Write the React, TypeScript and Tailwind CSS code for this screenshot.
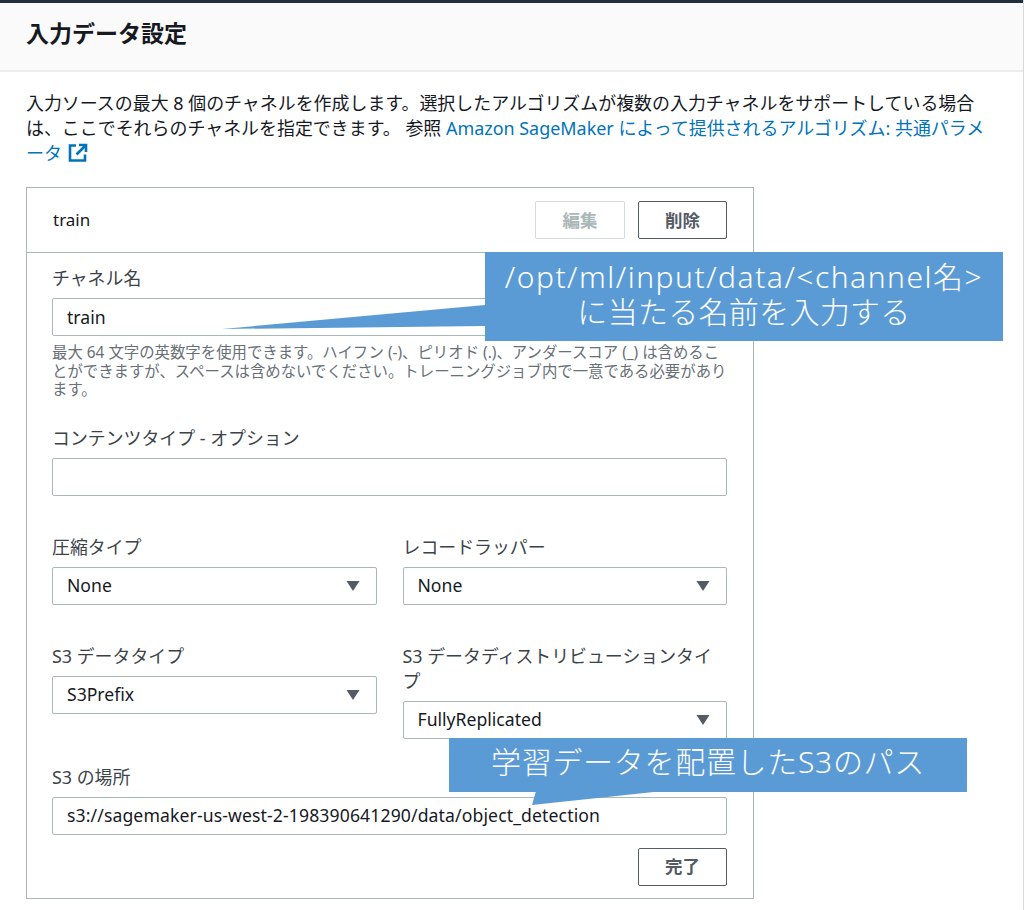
const inputCls =
  'h-[38px] w-full rounded-[2px] border border-[#aab7b8] bg-white px-[14px] flex items-center text-[17.6px] text-[#16191f]'

function Field({ label, children, className = '' }: { label: string; children?: React.ReactNode; className?: string }) {
  return (
    <div className={className}>
      <div className="mb-[7px] text-[17.9px] leading-[25px] text-[#3b4349]">{label}</div>
      {children}
    </div>
  )
}

function TextBox({ value }: { value?: string }) {
  return <div className={inputCls}>{value}</div>
}

function SelectBox({ value }: { value: string }) {
  return (
    <div className={inputCls + ' justify-between'}>
      <span>{value}</span>
      <svg width="16" height="12" viewBox="0 0 16 12" className="mr-[1px]">
        <path d="M1.5 1h13L8 11z" fill="#545b64" />
      </svg>
    </div>
  )
}

function Button({ children, disabled }: { children: React.ReactNode; disabled?: boolean }) {
  return (
    <button
      className={
        disabled
          ? 'h-[38px] w-[90px] rounded-[2px] border border-[#d5dbdb] bg-white text-[17.5px] font-bold text-[#aab7b8]'
          : 'h-[38px] w-[89px] rounded-[2px] border border-[#545b64] bg-white text-[17.5px] font-bold text-[#545b64]'
      }
    >
      {children}
    </button>
  )
}

export default function App() {
  return (
    <div
      className="relative h-[910px] w-full overflow-hidden border-r border-[#d5dbdb] bg-white text-[#16191f]"
      style={{ fontFamily: '"Noto Sans", "Noto Sans CJK JP", sans-serif' }}
    >
      <div className="h-[3px] bg-[#232f3e]" />

      {/* Header */}
      <div className="flex h-[69px] items-start border-b-2 border-[#eaeded] bg-[#fafafa] px-[26px] pt-[14px]">
        <h1 className="text-[23px] font-bold leading-[32px]">入力データ設定</h1>
      </div>

      <div className="px-[26px] pt-[19px]">
        <p className="w-[962px] text-[17.95px] leading-[25px]">
          入力ソースの最大 8 個のチャネルを作成します。選択したアルゴリズムが複数の入力チャネルをサポートしている場合は、ここでそれらのチャネルを指定できます。 参照{' '}
          <span className="text-[#0073bb]">
            Amazon SageMaker によって提供されるアルゴリズム: 共通パラメータ
            <svg width="20" height="20" viewBox="0 0 20 20" className="ml-[6px] inline-block align-[-3px]" fill="none" stroke="#0073bb" strokeWidth="2.6">
              <path d="M8 2.5H2v15h15v-6" />
              <path d="M11 2H18V9" />
              <path d="M18 2L8.5 11.5" />
            </svg>
          </span>
        </p>

        {/* Channel panel */}
        <div className="mt-[21px] w-[728px] border border-[#aab7b8]">
          <div className="flex h-[65px] items-center justify-between border-b border-[#aab7b8] pl-[26px] pr-[26px]">
            <span className="text-[17px]">train</span>
            <div className="flex gap-[13px]">
              <Button disabled>編集</Button>
              <Button>削除</Button>
            </div>
          </div>

          <div className="pb-[12px] pl-[25px] pr-[26px] pt-[13px]">
            <Field label="チャネル名">
              <TextBox value="train" />
            </Field>
            <p className="mt-[8px] text-[15.4px] leading-[18.5px] text-[#687078]">
              最大 64 文字の英数字を使用できます。ハイフン (-)、ピリオド (.)、アンダースコア (_) は含めることができますが、スペースは含めないでください。トレーニングジョブ内で一意である必要があります。
            </p>

            <Field label="コンテンツタイプ - オプション" className="mt-[26px]">
              <TextBox />
            </Field>

            <div className="mt-[39px] grid grid-cols-2 gap-x-[26px]">
              <Field label="圧縮タイプ">
                <SelectBox value="None" />
              </Field>
              <Field label="レコードラッパー">
                <SelectBox value="None" />
              </Field>
            </div>

            <div className="mt-[39px] grid grid-cols-2 gap-x-[26px]">
              <Field label="S3 データタイプ">
                <SelectBox value="S3Prefix" />
              </Field>
              <Field label="S3 データディストリビューションタイプ">
                <SelectBox value="FullyReplicated" />
              </Field>
            </div>

            <Field label="S3 の場所" className="mt-[26px]">
              <div className={inputCls + ' tracking-[0.12px]'}>s3://sagemaker-us-west-2-198390641290/data/object_detection</div>
            </Field>

            <div className="mt-[13px] flex justify-end">
              <Button>完了</Button>
            </div>
          </div>
        </div>
      </div>

      {/* Callouts pasted over the screenshot */}
      <svg width="1024" height="910" className="pointer-events-none absolute left-0 top-0">
        <path d="M222 329L485 305V326z" fill="#5b9bd5" />
        <path d="M536 791L532 805L663 791z" fill="#5b9bd5" />
      </svg>
      <div className="absolute left-[485px] top-[252px] flex h-[89px] w-[518px] flex-col items-center justify-center bg-[#5b9bd5] pb-[6px] text-center text-[30px] font-light leading-[35px] text-white">
        <div className="tracking-[1.5px]">/opt/ml/input/data/&lt;channel名&gt;</div>
        <div className="tracking-[0.3px]">に当たる名前を入力する</div>
      </div>
      <div className="absolute left-[449px] top-[738px] flex h-[54px] w-[518px] items-center justify-center bg-[#5b9bd5] pb-[8px] text-[30px] font-light tracking-[0.7px] text-white">
        学習データを配置したS3のパス
      </div>
    </div>
  )
}
